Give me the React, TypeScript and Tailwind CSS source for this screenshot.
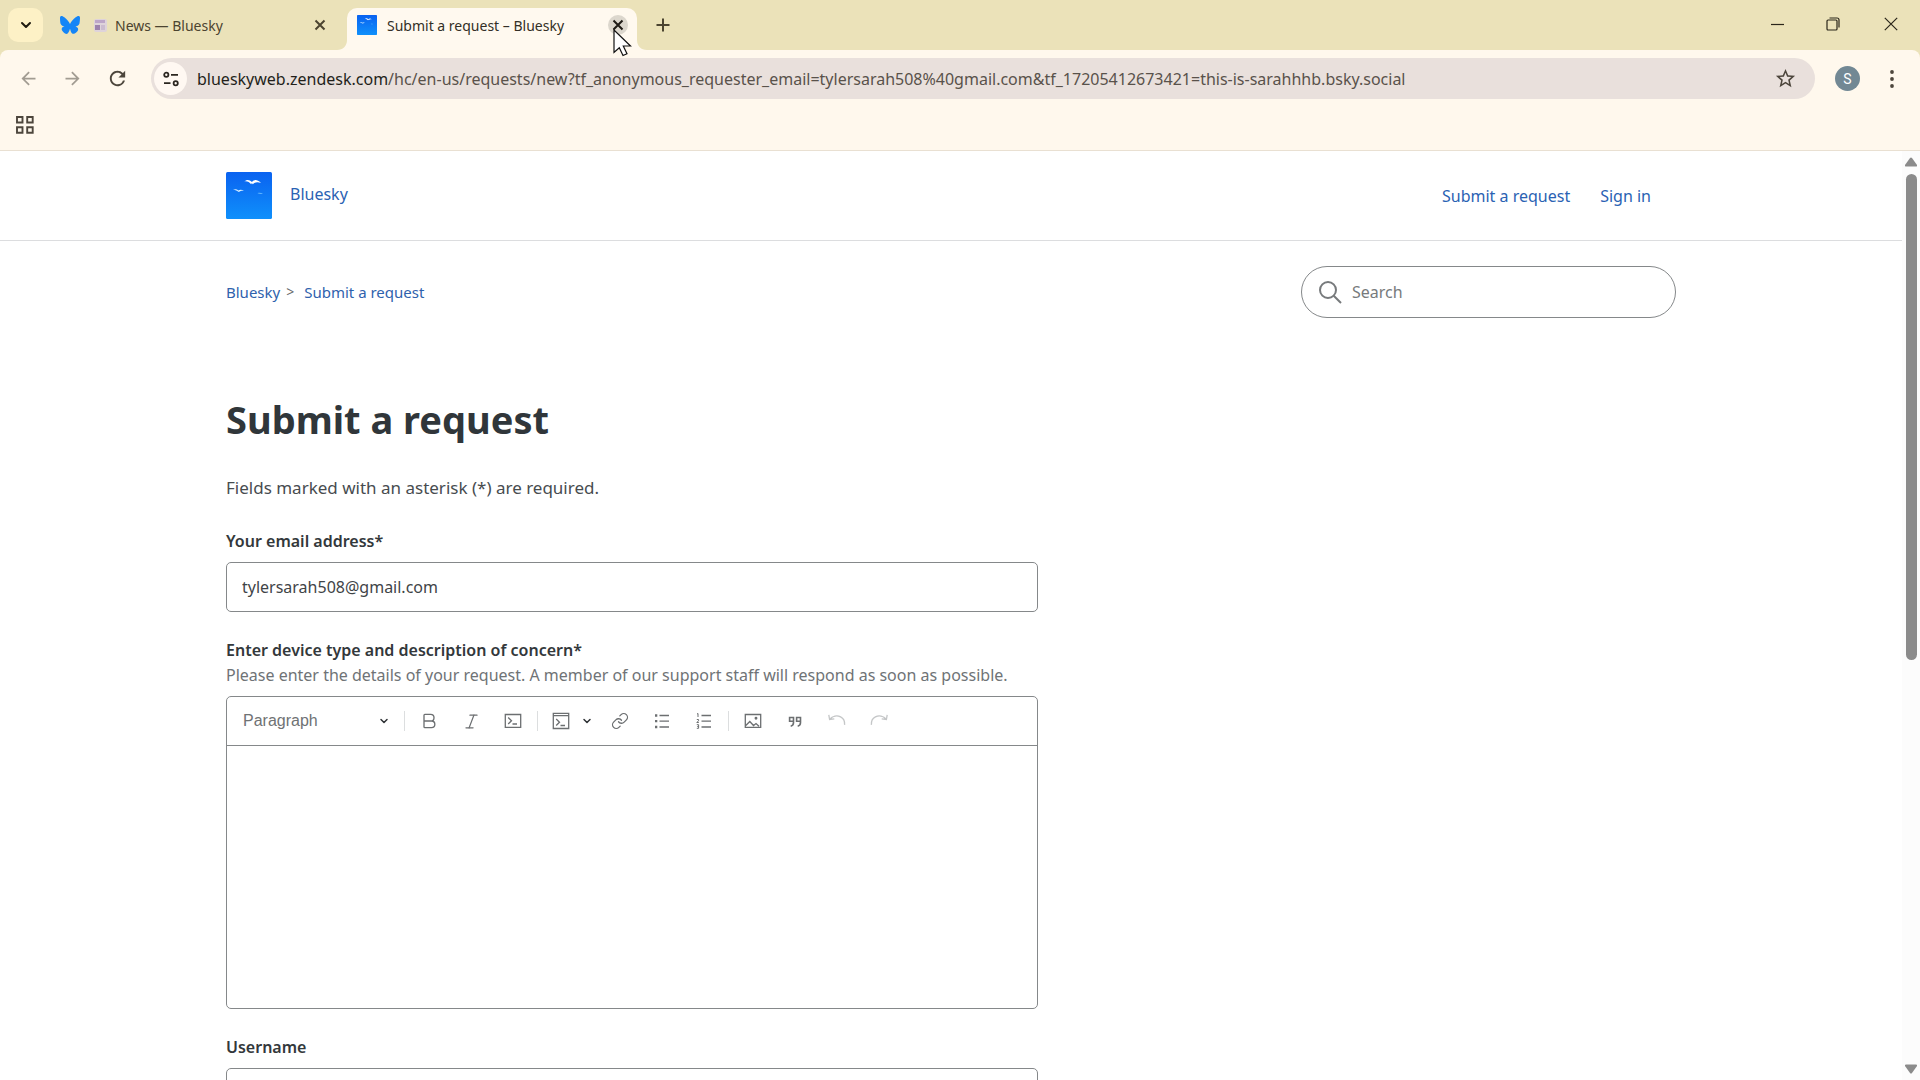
import type { ReactNode } from 'react';
import { Bold, ChevronDown, Italic, Link as LinkIcon } from 'lucide-react';
import { FaBluesky } from 'react-icons/fa6';
import { MdArrowBack, MdArrowForward, MdRefresh, MdStarOutline } from 'react-icons/md';

function SkyIcon({ className, id }: { className: string; id: string }) {
  return (
    <svg viewBox="0 0 46 47" preserveAspectRatio="none" className={className} aria-hidden="true">
      <defs>
        <linearGradient id={id} x1="0" y1="0" x2="0" y2="1">
          <stop offset="0" stopColor="#0a62f0" />
          <stop offset="1" stopColor="#0f90fb" />
        </linearGradient>
      </defs>
      <rect width="46" height="47" rx="1.5" fill={`url(#${id})`} />
      <path d="M18 9.500c3-2.400 5.500-2 8 .5 2.400-2.600 5-2.800 9 1-3-1.300-5.500-1.300-8.300 1.300-.6-1.300-1-1.300-1.600 0-1.800-2.400-4-3.300-7.100-2.800z" fill="#fff" />
      <path d="M7 18c2.200-1.300 3.800-1 5.300.5 1.500-1.200 3.400-1.100 5.700.3-2.200-.2-3.600 0-5.200 1.300-1.500-1.500-3.300-2.100-5.800-2.100z" fill="#d9efff" />
      <path d="M31.500 21.200c1.800-.7 3-.4 5.500.2-2 .7-3.500.7-5.500-.2z" fill="#5db4ff" />
    </svg>
  );
}

function CloseIcon() {
  return (
    <svg width="12" height="12" viewBox="0 0 12 12" fill="none" stroke="currentColor" strokeWidth="2" aria-hidden="true">
      <path d="M1.500 1.500l9 9M10.500 1.500l-9 9" />
    </svg>
  );
}

function TabCurve({ className }: { className: string }) {
  return (
    <svg viewBox="0 0 10 10" className={className} aria-hidden="true">
      <path d="M0 10C6 10 10 6 10 0V10z" fill="#fff9ef" />
    </svg>
  );
}

function TabStrip() {
  return (
    <div className="flex h-[50px] bg-[#ebe2b9] text-sm text-[#4b4430]">
      <div className="flex flex-1 pt-2 pl-2">
        <button aria-label="Search tabs" className="mr-2 flex h-[34px] w-[35px] items-center justify-center rounded-[10px] bg-[#fdf1c6] text-[#1f1b10]">
          <ChevronDown size={16} strokeWidth={3} />
        </button>
        <div className="flex h-[34px] w-[288px] items-center pr-[9px] pl-[9px]">
          <FaBluesky size={20} className="text-[#1485f7]" />
          <svg viewBox="0 0 13 13" className="ml-[14px] size-[13px]" aria-hidden="true">
            <rect width="13" height="13" rx="2" fill="#ded3da" />
            <path d="M1 1h10v3H1z" fill="#bda6c8" />
            <path d="M1 6h5v5H1z" fill="#9d83ad" />
            <path d="M7 6h4v5H7z" fill="#cbbccf" />
          </svg>
          <span className="ml-2 flex-1 pt-px">News — Bluesky</span>
          <button aria-label="Close tab" className="flex size-5 items-center justify-center">
            <CloseIcon />
          </button>
        </div>
        <div className="relative ml-2 flex h-[42px] w-[290px] items-center rounded-t-[10px] bg-[#fff9ef] pr-[9px] pb-2 pl-[10px] text-[#332f26]">
          <TabCurve className="absolute bottom-0 -left-[10px] size-[10px]" />
          <TabCurve className="absolute -right-[10px] bottom-0 size-[10px] -scale-x-100" />
          <SkyIcon id="sky-tab" className="size-5" />
          <span className="ml-[10px] flex-1 pt-px">Submit a request – Bluesky</span>
          <div className="relative size-5">
            <button aria-label="Close tab" className="flex size-5 items-center justify-center rounded-full bg-[#dcd7cd] text-[#1f1b16]">
              <CloseIcon />
            </button>
            {/* Mouse pointer */}
            <svg viewBox="0 0 19 28" className="absolute top-[14px] left-[5px] z-10 h-7 w-[19px]" aria-hidden="true">
              <path d="M1 1v22.500l5.300-4.800 3.700 7.800 4-1.800-3.700-7.700h7.200z" fill="#fff" stroke="#111" strokeWidth="1.200" />
            </svg>
          </div>
        </div>
        <button aria-label="New tab" className="ml-4 flex h-[34px] w-5 items-center justify-center">
          <svg width="14" height="14" viewBox="0 0 14 14" stroke="currentColor" strokeWidth="2" aria-hidden="true">
            <path d="M7 .5v13M.5 7h13" />
          </svg>
        </button>
      </div>
      <div className="flex text-[#2a261a]">
        <button aria-label="Minimize" className="flex h-[48px] w-[54px] items-center justify-center">
          <svg width="13" height="13" viewBox="0 0 13 13" stroke="currentColor" aria-hidden="true">
            <path d="M0 6.500h13" strokeWidth="1.200" />
          </svg>
        </button>
        <button aria-label="Restore" className="flex h-[48px] w-[58px] items-center justify-center">
          <svg width="14" height="14" viewBox="0 0 14 14" fill="none" stroke="currentColor" strokeWidth="1.200" aria-hidden="true">
            <rect x="1" y="3" width="10" height="10" rx="1" />
            <path d="M3.500 1h7.500a2 2 0 0 1 2 2v7.500" />
          </svg>
        </button>
        <button aria-label="Close window" className="flex h-[48px] w-[58px] items-center justify-center">
          <svg width="14" height="14" viewBox="0 0 14 14" stroke="currentColor" strokeWidth="1.200" aria-hidden="true">
            <path d="M.8.8l12.400 12.400M13.200.8L.8 13.200" />
          </svg>
        </button>
      </div>
    </div>
  );
}

function AddressBar() {
  return (
    <div className="bg-[#ebe2b9]">
      <div className="rounded-t-lg border-b border-[#e9e0d2] bg-[#fff8ed] text-[#4d463c]">
        <div className="flex items-center pt-2 pr-4 pl-[6px]">
          <button aria-label="Back" className="flex w-11 justify-center text-[#a29c92]">
            <MdArrowBack size={21} />
          </button>
          <button aria-label="Forward" className="flex w-11 justify-center text-[#a29c92]">
            <MdArrowForward size={21} />
          </button>
          <button aria-label="Reload" className="mr-[11px] flex w-[46px] justify-center">
            <MdRefresh size={23} />
          </button>
          <div className="flex h-[41px] flex-1 items-center rounded-full bg-[#e9e0dc] pr-[18px] pl-[3px]">
            <button aria-label="Site information" className="flex size-[33px] items-center justify-center rounded-full bg-[#fff8f2] text-[#2b2620]">
              <svg width="16" height="16" viewBox="0 0 16 16" fill="none" stroke="currentColor" strokeWidth="1.800" aria-hidden="true">
                <circle cx="3.300" cy="3.800" r="2.100" />
                <path d="M8 3.800h7M1 12.200h6.500" />
                <circle cx="12.700" cy="12.200" r="2.100" />
              </svg>
            </button>
            <div className="ml-[10px] flex-1 overflow-hidden text-base whitespace-nowrap text-[#59524b]">
              <span className="text-[#231f1a]">blueskyweb.zendesk.com</span>
              /hc/en-us/requests/new?tf_anonymous_requester_email=tylersarah508%40gmail.com&tf_17205412673421=this-is-sarahhhb.bsky.social
            </div>
            <button aria-label="Bookmark this tab">
              <MdStarOutline size={23} />
            </button>
          </div>
          <button aria-label="Profile" className="ml-5 flex size-[25px] items-center justify-center rounded-full bg-[#728894] font-['Roboto',sans-serif] text-sm text-white">
            S
          </button>
          <button aria-label="Menu" className="ml-5 flex w-6 justify-center">
            <svg width="4" height="18" viewBox="0 0 4 18" fill="currentColor" aria-hidden="true">
              <circle cx="2" cy="2" r="1.900" />
              <circle cx="2" cy="9" r="1.900" />
              <circle cx="2" cy="16" r="1.900" />
            </svg>
          </button>
        </div>
        {/* Bookmarks bar */}
        <div className="flex h-[51px] items-center pl-4">
          <button aria-label="Apps">
            <svg width="18" height="18" viewBox="0 0 18 18" fill="none" stroke="currentColor" strokeWidth="1.900" aria-hidden="true">
              <path d="M1 1h5.500v5.500H1zM11.200 1h5.500v5.500h-5.500zM1 11.200h5.500v5.500H1zM11.200 11.200h5.500v5.500h-5.500z" />
            </svg>
          </button>
        </div>
      </div>
    </div>
  );
}

function SiteHeader() {
  return (
    <header className="border-b border-[#dcdddf]">
      <div className="mx-auto flex h-[89px] max-w-[1450px] items-center justify-between text-[#2a62b3]">
        <a href="#home" className="flex items-center gap-[18px]">
          <SkyIcon id="sky-logo" className="h-[47px] w-[46px]" />
          <span className="pb-1">Bluesky</span>
        </a>
        <nav className="flex gap-[30px] pr-[25px]">
          <a href="#submit">Submit a request</a>
          <a href="#signin">Sign in</a>
        </nav>
      </div>
    </header>
  );
}

function ToolButton({ label, faded = false, children }: { label: string; faded?: boolean; children: ReactNode }) {
  return (
    <button
      type="button"
      aria-label={label}
      className={`flex h-8 w-[42px] items-center justify-center ${faded ? 'text-[#c4c6c7]' : 'text-[#6c6f71]'}`}
    >
      {children}
    </button>
  );
}

function ToolIcon({ children }: { children: ReactNode }) {
  return (
    <svg width="18" height="18" viewBox="0 0 18 18" fill="none" stroke="currentColor" strokeWidth="1.300" aria-hidden="true">
      {children}
    </svg>
  );
}

function Separator() {
  return <div className="mx-[3px] h-5 w-px bg-[#dcdedf]" />;
}

function EditorToolbar() {
  return (
    <div className="flex h-[49px] items-center border-b border-[#85888a] pl-4">
      <div className="relative flex items-center">
        <select aria-label="Heading" className="w-[158px] appearance-none font-['Liberation_Sans',sans-serif] text-base text-[#6f7274] outline-none">
          <option>Paragraph</option>
        </select>
        <ChevronDown size={12} strokeWidth={3} className="pointer-events-none absolute right-[11px] text-[#2f3336]" />
      </div>
      <Separator />
      <ToolButton label="Bold">
        <Bold size={20} strokeWidth={1.6} />
      </ToolButton>
      <ToolButton label="Italic">
        <Italic size={19} strokeWidth={1.5} />
      </ToolButton>
      <ToolButton label="Code">
        <ToolIcon>
          <path d="M1.300 2.500h15.400v12.800H1.300zM4.200 5.500l3.300 3.200-3.300 3.300M8.500 12h4.500" />
        </ToolIcon>
      </ToolButton>
      <Separator />
      <button type="button" aria-label="Code block" className="flex w-10 justify-center text-[#6c6f71]">
        <ToolIcon>
          <path d="M1.300 1.300h15.400v15.200H1.300zM1.300 3.600h15.400M4.200 7l3.300 3.200-3.300 3.300M8.500 13.500h4.500" />
        </ToolIcon>
      </button>
      <button type="button" aria-label="Code block language" className="w-[18px]">
        <ChevronDown size={12} strokeWidth={3} className="text-[#2f3336]" />
      </button>
      <ToolButton label="Link">
        <LinkIcon size={18} strokeWidth={1.7} />
      </ToolButton>
      <ToolButton label="Bulleted list">
        <ToolIcon>
          <path d="M6.500 3.500H16M6.500 9.200H16M6.500 15H16" />
          <path d="M2 3.500h2.300M2 9.200h2.300M2 15h2.300" strokeWidth="2.300" />
        </ToolIcon>
      </ToolButton>
      <ToolButton label="Numbered list">
        <ToolIcon>
          <path d="M6.500 3.500H16M6.500 9.200H16M6.500 15H16" />
          <path d="M2 2l1-.5v3.500M1.800 7.500h1.700v1.300l-1.700 1.700h2M1.800 12.700h1.800v3.600H1.800M2.300 14.500h1.300" strokeWidth="1" />
        </ToolIcon>
      </ToolButton>
      <Separator />
      <ToolButton label="Image">
        <ToolIcon>
          <path d="M1.300 2.500h15.400v12.800H1.300zM1.800 13.500l4-4 3.700 4 2.500-2 3 2.800" />
          <circle cx="12" cy="6.300" r=".8" fill="currentColor" />
        </ToolIcon>
      </ToolButton>
      <ToolButton label="Quote">
        <ToolIcon>
          <path d="M7.500 9.300H3.600V5.500h3.900v5c0 2-.8 3.200-2.800 3.700M14.500 9.300h-3.900V5.500h3.900v5c0 2-.8 3.200-2.800 3.700" strokeWidth="1.600" />
        </ToolIcon>
      </ToolButton>
      <ToolButton label="Undo" faded>
        <ToolIcon>
          <path d="M.8 2.800l.8 4.700 4.700-.6M1.600 7.200c3-3.200 7.600-4 11-2.300 2.900 1.400 4.300 4 4 8" />
        </ToolIcon>
      </ToolButton>
      <ToolButton label="Redo" faded>
        <ToolIcon>
          <path d="M17.200 2.800l-.8 4.700-4.700-.6M16.400 7.200c-3-3.200-7.600-4-11-2.300-2.900 1.400-4.300 4-4 8" />
        </ToolIcon>
      </ToolButton>
    </div>
  );
}

function RequestForm() {
  return (
    <form className="w-[56%] leading-[25px] text-[#33383b]">
      <label htmlFor="email" className="block font-semibold">
        Your email address*
      </label>
      <input
        id="email"
        type="email"
        defaultValue="tylersarah508@gmail.com"
        className="mt-2 h-[50px] w-full rounded-[5px] border border-[#85888a] px-[15px] text-[#3f4447] outline-none"
      />

      <label htmlFor="description" className="mt-[26px] block font-semibold">
        Enter device type and description of concern*
      </label>
      <p id="description-hint" className="text-[#6f7376]">
        Please enter the details of your request. A member of our support staff will respond as soon as possible.
      </p>
      <div className="mt-2 rounded-[5px] border border-[#85888a]">
        <EditorToolbar />
        <textarea id="description" aria-describedby="description-hint" className="block h-[262px] w-full resize-none p-4 outline-none" />
      </div>

      <label htmlFor="username" className="mt-[26px] block font-semibold">
        Username
      </label>
      <input id="username" type="text" className="mt-2 h-[50px] w-full rounded-[5px] border border-[#85888a] px-[15px] outline-none" />
    </form>
  );
}

function Scrollbar() {
  return (
    <div className="flex w-[18px] flex-col items-center bg-[#fcfcfc] py-[6px] text-[#8b8b8b]">
      <svg width="12" height="10" viewBox="0 0 12 10" fill="currentColor" aria-hidden="true">
        <path d="M5 1q1-1 2 0l5 7q.3 1.500-1 1.500H1q-1.300 0-1-1.500z" />
      </svg>
      <div className="my-[7px] flex w-[11px] flex-1 flex-col">
        <div className="h-[55%] rounded-full bg-[#8b8b8b]" />
      </div>
      <svg width="12" height="10" viewBox="0 0 12 10" fill="currentColor" aria-hidden="true">
        <path d="M5 9q1 1 2 0l5-7q.3-1.500-1-1.500H1Q-.3.500 0 2z" />
      </svg>
    </div>
  );
}

export default function App() {
  return (
    <div className="flex h-screen flex-col overflow-hidden bg-white font-['Noto_Sans','Open_Sans',sans-serif]">
      <TabStrip />
      <AddressBar />
      <div className="flex min-h-0 flex-1">
        <div className="flex-1 overflow-hidden text-base leading-6">
          <SiteHeader />
          <main className="mx-auto max-w-[1450px]">
            <div className="flex items-center justify-between pt-[25px]">
              <nav aria-label="Breadcrumb" className="flex items-center text-[15px] text-[#2f62ad]">
                <a href="#home">Bluesky</a>
                <span className="mr-[10px] ml-[6px] text-sm text-[#66696b]">&gt;</span>
                <a href="#submit">Submit a request</a>
              </nav>
              <div className="flex h-[52px] w-[375px] items-center rounded-full border border-[#85888a] pl-[17px] text-[#777a7c]">
                <svg width="23" height="23" viewBox="0 0 23 23" fill="none" stroke="currentColor" strokeWidth="2" aria-hidden="true">
                  <circle cx="9" cy="9" r="8" />
                  <path d="M14.700 14.700l7.300 7.300" />
                </svg>
                <input
                  type="search"
                  aria-label="Search"
                  placeholder="Search"
                  className="ml-[10px] min-w-0 flex-1 outline-none placeholder:text-[#777a7c]"
                />
              </div>
            </div>
            <h1 className="mt-[73px] text-[38px] leading-[56px] font-bold text-[#30363a]">Submit a request</h1>
            <p className="mt-[29px] mb-[29px] text-[17px] text-[#474c4f]">Fields marked with an asterisk (*) are required.</p>
            <RequestForm />
          </main>
        </div>
        <Scrollbar />
      </div>
    </div>
  );
}
